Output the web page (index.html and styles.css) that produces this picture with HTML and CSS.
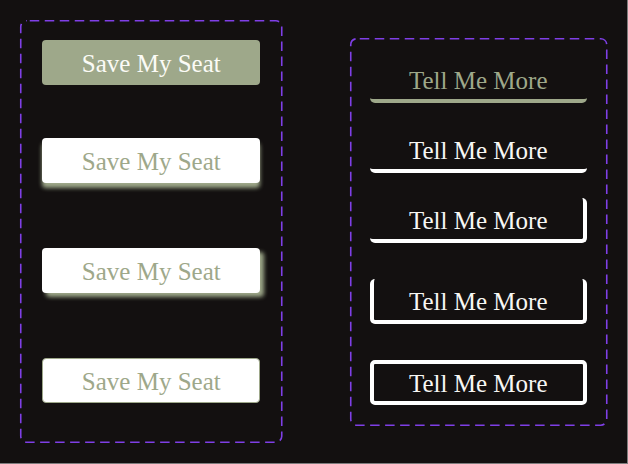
FILE: index.html
```html
<!DOCTYPE html>
<html lang="en">
<head>
<meta charset="utf-8">
<title>Buttons</title>
<link rel="stylesheet" href="styles.css">
</head>
<body>
<div class="page">
  <div class="panel panel-save">
    <svg class="dash" aria-hidden="true"><rect class="dash-rect"></rect></svg>
    <button class="save save-fill">Save My Seat</button>
    <button class="save save-drop">Save My Seat</button>
    <button class="save save-corner">Save My Seat</button>
    <button class="save save-outline">Save My Seat</button>
  </div>
  <div class="panel panel-more">
    <svg class="dash" aria-hidden="true"><rect class="dash-rect"></rect></svg>
    <button class="more more-accent">Tell Me More</button>
    <button class="more more-bottom">Tell Me More</button>
    <button class="more more-br">Tell Me More</button>
    <button class="more more-open">Tell Me More</button>
    <button class="more more-full">Tell Me More</button>
  </div>
</div>
</body>
</html>
```
FILE: styles.css
```css
html {
  background: #7d7d7d;
}
body {
  margin: 0;
  width: 627px;
  height: 463px;
  background: #131010;
  font-family: "Liberation Serif", "Times New Roman", serif;
}
.page {
  display: flex;
  align-items: center;
  padding: 20px;
  gap: 67px;
  box-sizing: border-box;
  height: 463px;
}
.panel {
  position: relative;
  box-sizing: border-box;
  display: flex;
  flex-direction: column;
  align-items: center;
}
.dash {
  position: absolute;
  left: 0;
  top: 0;
  width: 100%;
  height: 100%;
  overflow: visible;
  pointer-events: none;
}
.dash-rect {
  x: 0.75px;
  y: 0.75px;
  width: calc(100% - 1.5px);
  height: calc(100% - 1.5px);
  rx: 6px;
  ry: 6px;
  fill: none;
  stroke: #7f3fe6;
  stroke-width: 1.6px;
  stroke-dasharray: 9.5 5.5;
  stroke-dashoffset: -3;
}
.panel-save {
  width: 263px;
  height: 423px;
  padding-top: 20px;
  gap: 53px;
}
.panel-more {
  width: 258px;
  height: 388px;
  padding-top: 20px;
}
button {
  font-family: inherit;
  font-size: 25px;
  line-height: 1;
  cursor: pointer;
  box-sizing: border-box;
  padding: 0;
  margin: 0;
}
.save {
  width: 218px;
  height: 45px;
  border: none;
  border-radius: 4px;
  background: #ffffff;
  color: #9ea88a;
  padding-top: 2px;
}
.save-fill {
  background: #9ea88a;
  color: #fbfbf6;
}
.save-drop {
  box-shadow: 0 5px 4px #9ea88a;
}
.save-corner {
  margin-top: 12px;
  box-shadow: 4px 4px 4px #9ea88a;
}
.save-outline {
  margin-top: 12px;
  border: 1px solid #9ea88a;
}
.more {
  width: 217px;
  height: 45px;
  background: transparent;
  color: #f7f7f4;
  border: 0 solid #ffffff;
  border-radius: 5px;
  padding-top: 4px;
}
.more + .more {
  margin-top: 25px;
}
.more-accent {
  color: #9ea88a;
  border-bottom: 4px solid #9ea88a;
}
.more-bottom {
  border-bottom-width: 4px;
}
.more-br {
  border-bottom-width: 4px;
  border-right-width: 4px;
  padding-left: 4px;
}
.more.more-open {
  margin-top: 36px;
  border-width: 0 4px 4px 4px;
}
.more.more-full {
  margin-top: 36px;
  border-width: 4px;
  padding-top: 2px;
}
```
